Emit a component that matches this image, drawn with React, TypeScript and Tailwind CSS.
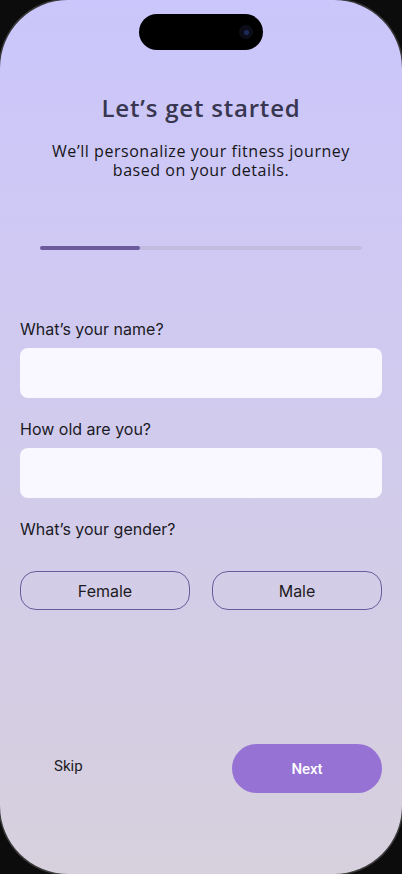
import React from 'react';

const HEADING_FONT = "font-['Open_Sans',sans-serif]";
const BODY_FONT = "font-['Inter',sans-serif]";

function GenderOption({ label }: { label: string }) {
  return (
    <button
      type="button"
      className={`h-[39px] flex-1 rounded-[16px] border border-[#6a5c9c] text-[16px] text-[#1d1b22] ${BODY_FONT}`}
    >
      {label}
    </button>
  );
}

export default function App() {
  return (
    <div className="h-[874px] w-[402px] overflow-hidden bg-[#0c0c0c]">
      <div className="relative h-full w-full rounded-[68px] bg-[linear-gradient(180deg,#cbc6fb_0%,#d0caf0_40%,#d7d0dd_100%)] shadow-[0_0_0_1.5px_#3a3a3a]">
        {/* dynamic island */}
        <div className="absolute left-[139px] top-[14px] flex h-[36px] w-[124px] items-center justify-end rounded-full bg-black pr-[10px]">
          <div className="flex h-[14px] w-[14px] items-center justify-center rounded-full bg-[#0d0d1a]">
            <div className="h-[5px] w-[5px] rounded-full bg-[#1e2a5a]" />
          </div>
        </div>

        <div className="flex flex-col px-[20px] pt-[92px]">
          <h1 className={`text-center text-[24px] font-semibold leading-[32px] tracking-[0.8px] text-[#383650] ${HEADING_FONT}`}>
            Let’s get started
          </h1>
          <p className={`mt-[18px] text-center text-[16px] leading-[19px] tracking-[0.55px] text-[#16151a] ${HEADING_FONT}`}>
            <span className="block">We’ll personalize your fitness journey</span>
            <span className="block">based on your details.</span>
          </p>

          <div className="mx-[20px] mt-[66px] h-[4px] rounded-full bg-[#c2bce0]">
            <div className="h-full w-[31%] rounded-full bg-[#6b5a9b]" />
          </div>

          <label className={`mt-[69px] text-[16px] leading-[20px] text-[#1b1a1f] ${BODY_FONT}`}>
            What’s your name?
          </label>
          <input className="mt-[9px] h-[50px] w-full rounded-[8px] bg-[#f9f7ff] px-3 outline-none" />

          <label className={`mt-[21px] text-[16px] leading-[20px] text-[#1b1a1f] ${BODY_FONT}`}>
            How old are you?
          </label>
          <input className="mt-[9px] h-[50px] w-full rounded-[8px] bg-[#f9f7ff] px-3 outline-none" />

          <label className={`mt-[21px] text-[16px] leading-[20px] text-[#1b1a1f] ${BODY_FONT}`}>
            What’s your gender?
          </label>
          <div className="mt-[32px] flex gap-[22px]">
            <GenderOption label="Female" />
            <GenderOption label="Male" />
          </div>

          <div className="mt-[134px] flex items-center justify-between">
            <button
              type="button"
              className="mb-[4px] pl-[34px] font-['Roboto',sans-serif] text-[15px] text-[#1c1b1f]"
            >
              Skip
            </button>
            <button
              type="button"
              className="h-[49px] w-[150px] rounded-full bg-[#9672d4] pt-[2px] font-['Roboto',sans-serif] text-[15px] font-medium text-white"
            >
              Next
            </button>
          </div>
        </div>
      </div>
    </div>
  );
}
